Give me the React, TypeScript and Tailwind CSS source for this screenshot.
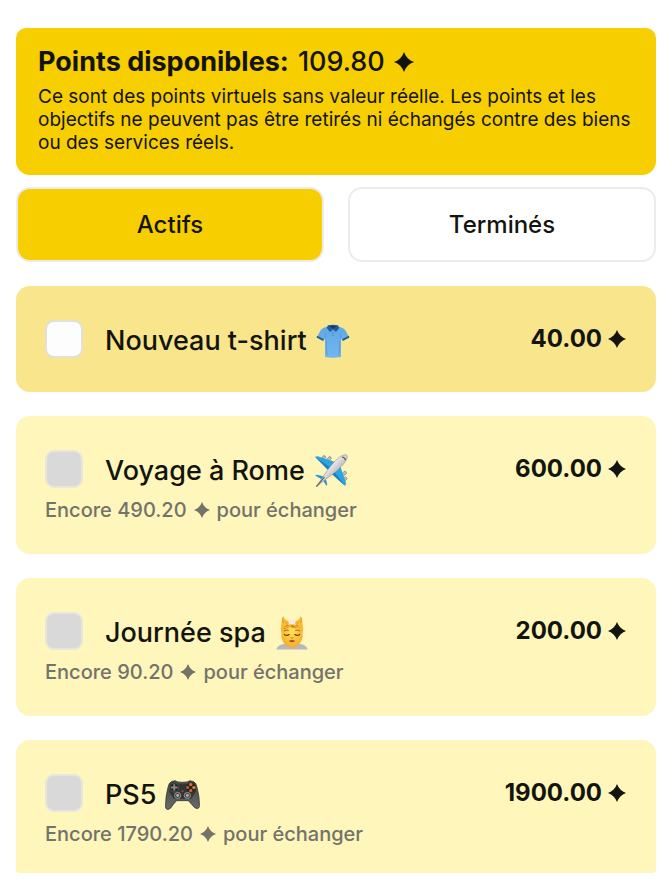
import { useState } from "react";

type Tab = "active" | "done";

type Goal = {
  id: string;
  name: string;
  icon: () => React.JSX.Element;
  price: number;
};

const BALANCE = 109.8;

const GOALS: Goal[] = [
  { id: "goal-shirt", name: "Nouveau t-shirt", icon: ShirtIcon, price: 40 },
  { id: "goal-rome",  name: "Voyage à Rome",   icon: PlaneIcon, price: 600 },
  { id: "goal-spa",   name: "Journée spa",     icon: SpaIcon,   price: 200 },
  { id: "goal-ps5",   name: "PS5",             icon: PadIcon,   price: 1900 },
];

function Star({ className }: { className: string }) {
  return (
    <svg viewBox="0 0 20 20" fill="currentColor" aria-hidden="true" className={`inline-block shrink-0 ${className}`}>
      <path d="M10 0C11.800 5 15 8.200 20 10C15 11.800 11.800 15 10 20C8.200 15 5 11.800 0 10C5 8.200 8.200 5 10 0Z" />
    </svg>
  );
}

function ShirtIcon() {
  return (
    <svg width="34" height="34" viewBox="0 0 34 34" aria-hidden="true" className="shrink-0">
      <defs>
        <linearGradient id="shirt-cloth" x1="0" y1="0" x2="0" y2="1">
          <stop offset="0" stopColor="#5fa9e6" />
          <stop offset="1" stopColor="#73b6ef" />
        </linearGradient>
      </defs>
      <path d="M11.5 2.5C7 4 5.5 5 4.5 6.5L1 13l6.500 3.500L9 14.500V33q8 1.500 16 0V14.500l1.500 2L33 13l-3.500-6.500C28.500 5 27 4 22.500 2.500q-5.500 3-11 0z" fill="url(#shirt-cloth)" />
      <path d="M9 14.500L10 9M25 14.500L24 9M10 16l1 15M24 17l-1 14" stroke="#4f92cf" strokeWidth=".7" fill="none" />
      <path d="M1.200 11.800l6.800 3.400-.9 1.700L.5 13.400zM32.800 11.800L26 15.200l.9 1.700 6.600-3.500z" fill="#235b94" />
      <path d="M12 1.200Q17 .2 22 1.200L23.200 4 20 8l-3-2.700L14 8l-3.200-4z" fill="#245c98" />
      <path d="M13.500 2.200q3.500-1 7 0L17 5z" fill="#143d6b" />
      <path d="M16 6h2v6h-2z" fill="#4b94d4" />
      <path d="M17 7.500v.8M17 10v.8" stroke="#d5ebfb" strokeWidth=".8" />
    </svg>
  );
}

function PlaneIcon() {
  return (
    <svg width="34" height="34" viewBox="0 0 36 36" aria-hidden="true" className="shrink-0">
      <defs>
        <linearGradient id="fuselage" x1="0" y1="0" x2="1" y2="1">
          <stop offset=".3" stopColor="#ffffff" />
          <stop offset=".7" stopColor="#a9a7ad" />
        </linearGradient>
      </defs>
      <g fill="#bdbcb8" stroke="#77767a" strokeWidth=".6">
        <rect x="8.500" y="1.500" width="3.200" height="5" rx="1.500" transform="rotate(40 10 4)" />
        <rect x="14.500" y="2.500" width="3.200" height="5" rx="1.500" transform="rotate(40 16 5)" />
        <rect x="30.500" y="18" width="3.200" height="5" rx="1.500" transform="rotate(50 32 20.500)" />
        <rect x="31" y="24" width="3.200" height="5" rx="1.500" transform="rotate(50 32.500 26.500)" />
      </g>
      <path d="M1 3l3-.5L24 9l-8 9z" fill="#2ba5e2" />
      <path d="M1 3l16 11-2 3z" fill="#1983bd" />
      <path d="M33 34l1-3L27.500 12 19 21z" fill="#2ba5e2" />
      <path d="M33 34L21 18l-2.500 3z" fill="#1983bd" />
      <path d="M1 22.500l2-.5 9 2-2 4zM13.500 34l.5-2-2-8-3 3.500z" fill="#2499d6" />
      <path d="M2.500 34.500L12 20.500C17 13 24 4.500 29 2c3-1.500 5.500-1.500 6-.5s.2 3.500-1.500 6C30 13 23 19.500 15.500 24.500z" fill="url(#fuselage)" stroke="#8c8b90" strokeWidth=".6" />
      <path d="M2.500 34.500L11 24.500" stroke="#55606a" strokeWidth="1.200" />
      <path d="M29.500 3.200q3 .3 3.800 3.300" fill="none" stroke="#4b5961" strokeWidth="1.200" />
    </svg>
  );
}

function SpaIcon() {
  return (
    <svg width="34" height="34" viewBox="0 0 34 36" aria-hidden="true" className="shrink-0">
      <defs>
        <radialGradient id="face" cx=".5" cy=".4" r=".65">
          <stop offset="0" stopColor="#ffe05a" />
          <stop offset="1" stopColor="#f4aa22" />
        </radialGradient>
      </defs>
      <path d="M.5 35.500c1-4 5-5.500 10-6h13c5 .5 9 2 10 6z" fill="#b6b8be" />
      <path d="M12 27h10v4q-5 4-10 0z" fill="#d98e1b" />
      <path d="M6 12Q6 5 17 5t11 7l.3 8C28.300 28 22.500 33 17 33S5.700 28 5.700 20z" fill="url(#face)" />
      <path d="M6 17Q5.500 6 17 6t11 11q-1.500-4-4-5-6 1.500-9-1-4 3-6.500 2.500Q6.500 15 6 17z" fill="#c98118" />
      <path d="M9 12q6 0 9-4.500Q20 12 26 12" fill="none" stroke="#f2b335" strokeWidth="1.800" />
      <path d="M11 5q6-3 12 0l-2 4.500q-4-1.500-8 0z" fill="#f7ebe0" />
      <path d="M5 14L6.500 2q.3-2 1.500-1.500L10 4l3 1.200 1 3.300-5 2.500L7 16zM29 14L27.500 2q-.3-2-1.500-1.500L24 4l-3 1.200-1 3.300 5 2.500 2 5z" fill="#f8bd35" />
      <path d="M7.200 2.500l.3 5M26.800 2.500l-.3 5M10 6l2 3M24 6l-2 3" stroke="#dc8f1e" strokeWidth=".8" />
      <path d="M8.500 16q2.500-2 5-.5M20.500 15.500q2.500-1.500 5 .5" stroke="#a4610f" strokeWidth="1" fill="none" />
      <path d="M9 19.500q2.500 2 5 .2M20 19.700q2.500 1.800 5-.2" stroke="#65400d" strokeWidth="1.300" fill="none" strokeLinecap="round" />
      <path d="M15.500 23q1.500 1 3 0" stroke="#c87a17" strokeWidth="1" fill="none" />
      <path d="M13.500 26.500q3.500-2 7 0-3.500 2.800-7 0z" fill="#a94d2e" />
    </svg>
  );
}

function PadIcon() {
  return (
    <svg width="35" height="30" viewBox="0 0 36 32" preserveAspectRatio="none" aria-hidden="true" className="shrink-0">
      <defs>
        <linearGradient id="pad-shell" x1="0" y1="0" x2="0" y2="1">
          <stop offset="0" stopColor="#454745" />
          <stop offset="1" stopColor="#686b6b" />
        </linearGradient>
      </defs>
      <path d="M7 1.500Q11 0 13 2q5 1 10 0 2-2 6-.5 3 1 4 6.500 2.500 10 2.500 19 0 3.500-2.500 3.500T27.500 26L24 22H12l-3.500 4Q5.500 31.500 3 31.500T.5 28Q.5 18 3 8 4 2.500 7 1.500z" fill="url(#pad-shell)" stroke="#303331" strokeWidth=".8" />
      <path d="M5 4q3.500-2.500 8 0 5 1 10 0 4.500-2.500 8 0l1 8-5 8H9l-5-8z" fill="#323432" />
      <circle cx="9.500" cy="8" r="4.800" fill="#202220" stroke="#686a65" strokeWidth=".7" />
      <path d="M8.500 4.500h2v2.500h2.500v2h-2.500v2.500h-2V9H6V7h2.500z" fill="#85877f" />
      <circle cx="26.500" cy="8" r="4.800" fill="#242624" />
      <circle cx="26.500" cy="4.800" r="1.700" fill="#ee6b28" />
      <circle cx="29.700" cy="8" r="1.700" fill="#f07a31" />
      <circle cx="26.500" cy="11.200" r="1.700" fill="#e5602d" />
      <circle cx="23.300" cy="8" r="1.500" fill="#a06a45" />
      <g fill="#414442" stroke="#9b9d99" strokeWidth="1">
        <circle cx="13" cy="16.500" r="3.200" />
        <circle cx="23" cy="16.500" r="3.200" />
      </g>
      <circle cx="13" cy="16.500" r="1.500" fill="#b0b2ad" />
      <circle cx="23" cy="16.500" r="1.500" fill="#b0b2ad" />
      <circle cx="18" cy="12" r="1.100" fill="#9a5030" />
    </svg>
  );
}

function TabButton({ label, selected, onClick }: { label: string; selected: boolean; onClick: () => void }) {
  return (
    <button
      onClick={onClick}
      aria-pressed={selected}
      className={`flex-1 h-[75px] rounded-[14px] border-2 border-[#ececec] text-[24px] font-medium ${
        selected ? "bg-[#f7ce00]" : "bg-white"
      }`}
    >
      {label}
    </button>
  );
}

function GoalCard({ goal, checked, onToggle }: { goal: Goal; checked: boolean; onToggle: () => void }) {
  const missing = goal.price - BALANCE;
  const locked = missing > 0;
  const Icon = goal.icon;

  return (
    <li
      className={`rounded-[14px] pl-[29px] pr-[30px] pt-[34px] last:rounded-b-[4px] last:pb-[27px] ${
        locked ? "bg-[#fef6bb] pb-8" : "bg-[#f9e58c] pb-[34px]"
      }`}
    >
      <div className="flex items-center justify-between">
        <div className="flex items-center">
          <input
            id={goal.id}
            type="checkbox"
            checked={checked}
            disabled={locked}
            onChange={onToggle}
            className="appearance-none shrink-0 w-[38px] h-[38px] rounded-[9px] border-2 border-[#e0e0dc] bg-[#fdfdfd] checked:bg-[#f7ce00] disabled:border-[#e8e7df] disabled:bg-[#d9d9d9]"
          />
          <label htmlFor={goal.id} className="flex items-center gap-[9px] pl-[22px] pt-1 text-[27px] leading-[34px] font-medium">
            {goal.name}
            <Icon />
          </label>
        </div>
        <span className="flex items-center gap-[6px] text-[24px] leading-[38px] font-bold">
          {goal.price.toFixed(2)}
          <Star className="w-[18px] h-[18px]" />
        </span>
      </div>
      {locked && (
        <p className="flex items-center gap-[7px] pt-[10px] text-[20px] leading-6 font-medium text-[#73726b]">
          Encore {missing.toFixed(2)}
          <Star className="w-4 h-4" />
          pour échanger
        </p>
      )}
    </li>
  );
}

export default function App() {
  const [tab, setTab] = useState<Tab>("active");
  const [done, setDone] = useState<string[]>([]);

  function toggle(id: string) {
    setDone((ids) => (ids.includes(id) ? ids.filter((x) => x !== id) : [...ids, id]));
  }

  const visible = GOALS.filter((goal) => done.includes(goal.id) === (tab === "done"));

  return (
    <main className="px-4 py-7 bg-white text-[#14140f] font-['Inter',sans-serif]">
      {/* Balance */}
      <section className="rounded-t-[10px] rounded-b-[14px] bg-[#f7ce00] px-[22px] pt-4 pb-[21px]">
        <h1 className="flex items-center gap-[9px] text-[27px] leading-9 font-medium">
          <strong className="font-bold">Points disponibles:</strong>
          {BALANCE.toFixed(2)}
          <Star className="w-5 h-5" />
        </h1>
        <p className="pt-[5px] text-[19px] leading-[23px] font-normal">
          Ce sont des points virtuels sans valeur réelle. Les points et les objectifs ne peuvent pas être retirés ni
          échangés contre des biens ou des services réels.
        </p>
      </section>

      {/* Tabs */}
      <div className="flex gap-6 pt-3">
        <TabButton label="Actifs" selected={tab === "active"} onClick={() => setTab("active")} />
        <TabButton label="Terminés" selected={tab === "done"} onClick={() => setTab("done")} />
      </div>

      {/* Goals */}
      <ul className="flex flex-col gap-6 pt-6">
        {visible.map((goal) => (
          <GoalCard key={goal.id} goal={goal} checked={done.includes(goal.id)} onToggle={() => toggle(goal.id)} />
        ))}
      </ul>
    </main>
  );
}
